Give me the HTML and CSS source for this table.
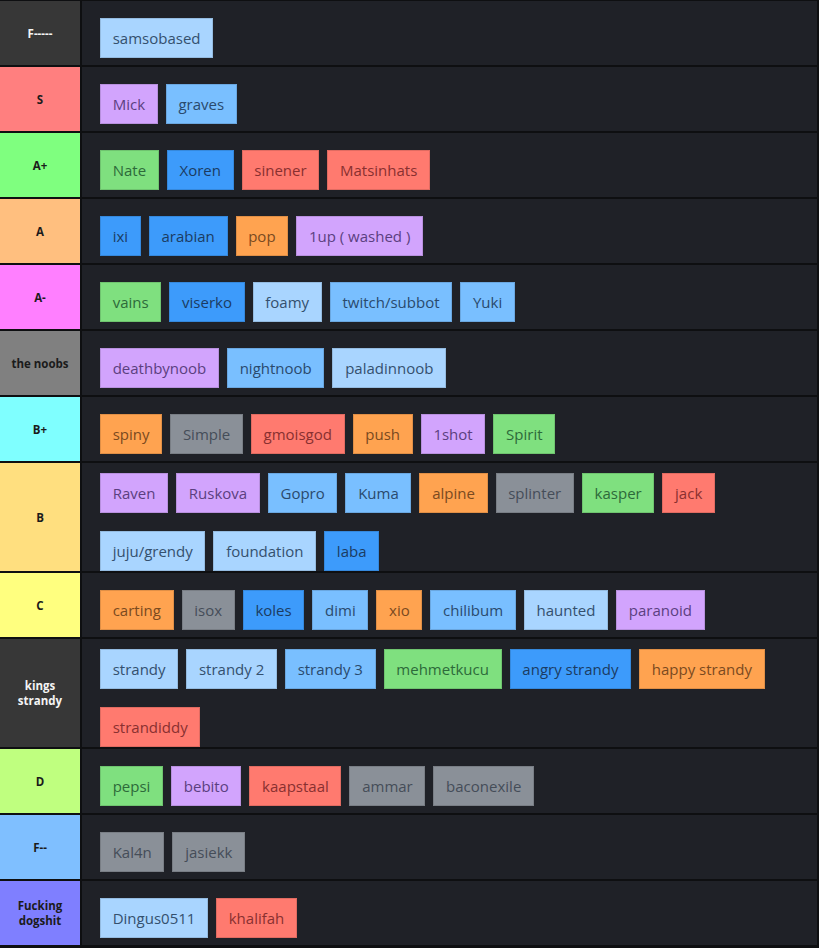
FILE: index.html
```html
<!DOCTYPE html>
<html>
<head>
<meta charset="utf-8">
<link rel="stylesheet" href="styles.css">
</head>
<body>
<div class="tierlist">
  <div class="row"><div class="label dark light-text">F-----</div><div class="items"><span class="chip lb">samsobased</span></div></div>
  <div class="row"><div class="label t-s">S</div><div class="items"><span class="chip pu">Mick</span><span class="chip bl">graves</span></div></div>
  <div class="row"><div class="label t-ap">A+</div><div class="items"><span class="chip gr">Nate</span><span class="chip db">Xoren</span><span class="chip re">sinener</span><span class="chip re">Matsinhats</span></div></div>
  <div class="row"><div class="label t-a">A</div><div class="items"><span class="chip db">ixi</span><span class="chip db">arabian</span><span class="chip or">pop</span><span class="chip pu">1up ( washed )</span></div></div>
  <div class="row"><div class="label t-am">A-</div><div class="items"><span class="chip gr">vains</span><span class="chip db">viserko</span><span class="chip lb">foamy</span><span class="chip bl">twitch/subbot</span><span class="chip bl">Yuki</span></div></div>
  <div class="row"><div class="label t-noob">the noobs</div><div class="items"><span class="chip pu">deathbynoob</span><span class="chip bl">nightnoob</span><span class="chip lb">paladinnoob</span></div></div>
  <div class="row"><div class="label t-bp">B+</div><div class="items"><span class="chip or">spiny</span><span class="chip gy">Simple</span><span class="chip re">gmoisgod</span><span class="chip or">push</span><span class="chip pu">1shot</span><span class="chip gr">Spirit</span></div></div>
  <div class="row"><div class="label t-b">B</div><div class="items"><span class="chip pu">Raven</span><span class="chip pu">Ruskova</span><span class="chip bl">Gopro</span><span class="chip bl">Kuma</span><span class="chip or">alpine</span><span class="chip gy">splinter</span><span class="chip gr">kasper</span><span class="chip re">jack</span><span class="chip lb">juju/grendy</span><span class="chip lb">foundation</span><span class="chip db">laba</span></div></div>
  <div class="row"><div class="label t-c">C</div><div class="items"><span class="chip or">carting</span><span class="chip gy">isox</span><span class="chip db">koles</span><span class="chip bl">dimi</span><span class="chip or">xio</span><span class="chip bl">chilibum</span><span class="chip lb">haunted</span><span class="chip pu">paranoid</span></div></div>
  <div class="row"><div class="label dark light-text">kings<br>strandy</div><div class="items"><span class="chip lb">strandy</span><span class="chip lb">strandy 2</span><span class="chip bl">strandy 3</span><span class="chip gr">mehmetkucu</span><span class="chip db">angry strandy</span><span class="chip or">happy strandy</span><span class="chip re">strandiddy</span></div></div>
  <div class="row"><div class="label t-d">D</div><div class="items"><span class="chip gr">pepsi</span><span class="chip pu">bebito</span><span class="chip re">kaapstaal</span><span class="chip gy">ammar</span><span class="chip gy">baconexile</span></div></div>
  <div class="row"><div class="label t-fm">F--</div><div class="items"><span class="chip gy">Kal4n</span><span class="chip gy">jasiekk</span></div></div>
  <div class="row"><div class="label t-fd">Fucking<br>dogshit</div><div class="items"><span class="chip lb">Dingus0511</span><span class="chip re">khalifah</span></div></div>
</div>
</body>
</html>
```

FILE: styles.css
```css
* { box-sizing: border-box; }
html, body { margin: 0; padding: 0; }
body {
  background: #0e0f11;
  width: 819px;
  height: 948px;
  overflow: hidden;
  font-family: "Open Sans", "Noto Sans", sans-serif;
}
.tierlist {
  display: flex;
  flex-direction: column;
  gap: 2px;
  padding: 1px 2px 3px 0;
  background: #0e0f11;
}
.row {
  display: flex;
  gap: 2px;
  min-height: 64px;
}
.label {
  width: 80px;
  flex: 0 0 80px;
  display: flex;
  align-items: center;
  justify-content: center;
  text-align: center;
  font-weight: 700;
  font-size: 11.5px;
  line-height: 15px;
  color: #1b1b1b;
}
.light-text { color: #f4f4f4; }
.dark { background: #373737; }
.t-s { background: #ff7f7f; }
.t-ap { background: #7fff7f; }
.t-a { background: #ffbf7f; }
.t-am { background: #ff7fff; }
.t-noob { background: #808080; }
.t-bp { background: #7fffff; }
.t-b { background: #ffdf7f; }
.t-c { background: #ffff7f; }
.t-d { background: #bfff7f; }
.t-fm { background: #7fbfff; }
.t-fd { background: #7f7fff; }
.items {
  flex: 1;
  background: #1f2127;
  display: flex;
  flex-wrap: wrap;
  align-content: center;
  column-gap: 8px;
  row-gap: 8px;
  padding: 0 10px 0 18px;
}
.chip {
  margin-top: 10px;
  height: 40px;
  padding: 0 11.7px;
  display: flex;
  align-items: center;
  font-size: 15px;
  border: 1px solid rgba(0,0,0,0.12);
}
.lb { background: #a9d5ff; color: #34506e; }
.bl { background: #79bfff; color: #2a4a6d; }
.db { background: #3d9bfb; color: #1b3b62; }
.pu { background: #d2a4fd; color: #5b3f80; }
.gr { background: #7fe07f; color: #2d6a3a; }
.re { background: #ff7a6f; color: #893030; }
.or { background: #ffa350; color: #7a4a1f; }
.gy { background: #8a9098; color: #454d58; }
```
